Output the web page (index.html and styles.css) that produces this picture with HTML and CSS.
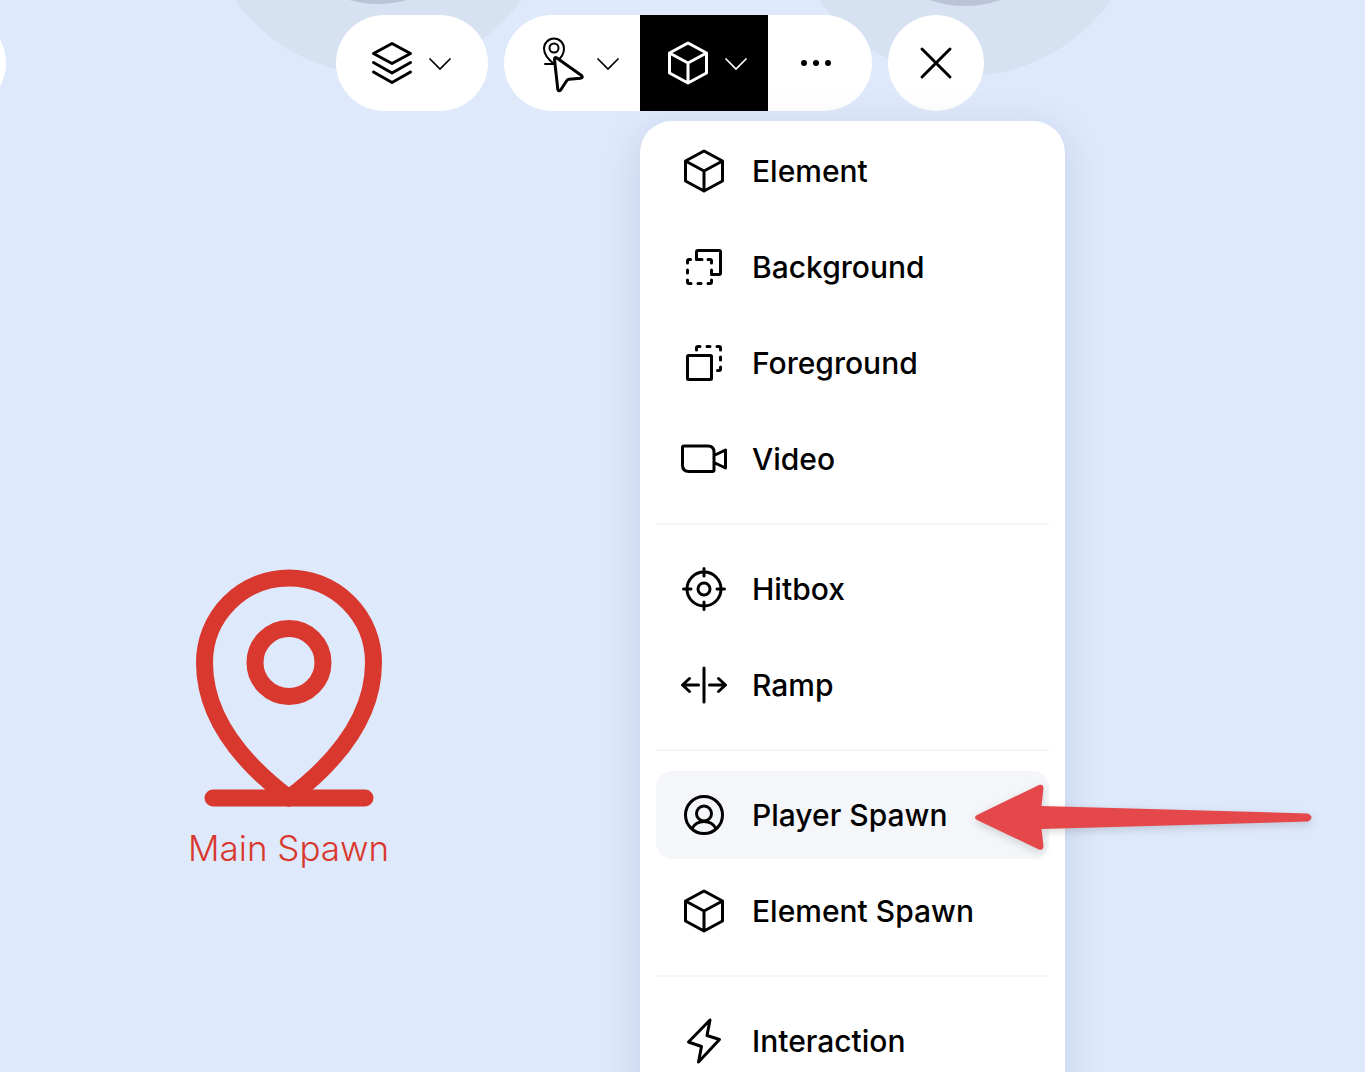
FILE: index.html
```html
<!DOCTYPE html>
<html lang="en">
<head>
  <meta charset="UTF-8" />
  <meta name="viewport" content="width=device-width, initial-scale=1.0" />
  <title>Map Editor</title>
  <link rel="stylesheet" href="styles.css">
</head>
<body>
  <!-- shared icons -->
  <svg class="sprite" aria-hidden="true">
    <symbol id="cube" viewBox="0 0 48 48">
      <path d="M24 4 42.500 14V34L24 44 5.500 34V14Z M5.500 14 24 24 42.500 14 M24 24V44" />
    </symbol>
    <symbol id="chevron" viewBox="0 0 24 24">
      <path d="M2 8l10 10L22 8" />
    </symbol>
  </svg>

  <main class="map">
    <div class="zone zone-left"></div>
    <div class="zone zone-right"></div>

    <div class="spawn">
      <svg class="spawn-pin" viewBox="0 0 200 240" aria-hidden="true">
        <path d="M100 230C63 202 15.500 157 15.500 94.500a84.500 84.500 0 0 1 169 0C184.500 157 137 202 100 230Z" />
        <circle cx="100" cy="94.500" r="34" />
        <path d="M24 230H176" />
      </svg>
      <span class="spawn-label">Main Spawn</span>
    </div>

    <header class="toolbar">
      <button class="pill pill-edge" aria-label="Back"></button>

      <div class="pill layers">
        <button class="tool" aria-label="Layers">
          <svg class="icon" viewBox="0 0 48 48"><path d="M24 4.500 42.500 14.500 24 24.500 5.500 14.500Z M5.500 23.500 24 34 42.500 23.500 M5.500 33 24 43.500 42.500 33" /></svg>
          <svg class="chevron"><use href="#chevron" /></svg>
        </button>
      </div>

      <div class="pill tools">
        <button class="tool tool-first" aria-label="Select">
          <svg class="icon" viewBox="0 0 48 48">
            <g class="thin">
              <path d="M18 25C13 21 8 16 8 9.500a10 10 0 0 1 20 0C28 14 25 19 21 22" />
              <circle cx="18" cy="9" r="4.500" />
              <path d="M9 25h8" />
            </g>
            <path class="pointer" d="M20.500 18.800 45.500 36.500Q47.500 38.800 44.500 39.300L33 40.300Q31.500 40.500 30.500 42L24.800 50.800Q22.500 53 21.800 50.300L18.500 20.300Q18.600 18 20.500 18.800Z" />
          </svg>
          <svg class="chevron"><use href="#chevron" /></svg>
        </button>
        <div class="dropdown">
          <button class="tool active" aria-label="Add" aria-expanded="true">
            <svg class="icon"><use href="#cube" /></svg>
            <svg class="chevron"><use href="#chevron" /></svg>
          </button>

          <div class="menu">
            <div class="menu-group">
              <button class="menu-item">
                <svg class="icon"><use href="#cube" /></svg>
                Element
              </button>
              <button class="menu-item">
                <svg class="icon" viewBox="0 0 48 48">
                  <path d="M22 16.500H16.500V9Q16.500 7.500 18 7.500H39Q40.500 7.500 40.500 9V30Q40.500 31.500 39 31.500H31.500" />
                  <path d="M7.500 20V18Q7.500 16.500 9 16.500H10.500 M28 16.500H30Q31.500 16.500 31.500 18V20 M31.500 37V39Q31.500 40.500 30 40.500H28 M11 40.500H9Q7.500 40.500 7.500 39V37 M7.500 27V30 M31.500 27V30 M18 40.500H21" />
                </svg>
                Background
              </button>
              <button class="menu-item">
                <svg class="icon" viewBox="0 0 48 48">
                  <rect x="7.500" y="16.500" width="24" height="24" rx="1" />
                  <path d="M16.500 11V9Q16.500 7.500 18 7.500H20 M27 7.500H30 M37 7.500H39Q40.500 7.500 40.500 9V11 M40.500 18V21 M40.500 28V30Q40.500 31.500 39 31.500H37.500" />
                </svg>
                Foreground
              </button>
              <button class="menu-item">
                <svg class="icon" viewBox="0 0 48 48">
                  <path d="M4 11H28Q34 11 34 17V35Q34 36.500 32.500 36.500H9Q2.500 36.500 2.500 30V12.500Q2.500 11 4 11Z M34 20.500 45.500 15V33L34 27.500" />
                </svg>
                Video
              </button>
            </div>
            <div class="menu-group">
              <button class="menu-item">
                <svg class="icon" viewBox="0 0 48 48">
                  <circle cx="24" cy="24" r="17" />
                  <circle cx="24" cy="24" r="6" />
                  <path d="M24 3.500V11 M24 37V44.500 M3.500 24H11 M37 24H44.500" />
                </svg>
                Hitbox
              </button>
              <button class="menu-item">
                <svg class="icon" viewBox="0 0 48 48">
                  <path d="M24 7V41 M18.500 24H2.500 M9.500 17.500 2.500 24 9.500 30.500 M29.500 24H45.500 M38.500 17.500 45.500 24 38.500 30.500" />
                </svg>
                Ramp
              </button>
            </div>
            <div class="menu-group">
              <button class="menu-item hover">
                <svg class="icon" viewBox="0 0 48 48">
                  <circle cx="24" cy="24" r="18.500" />
                  <circle cx="24" cy="22.500" r="7.500" />
                  <path d="M12 37.500C17 28 31 28 36 37.500" />
                </svg>
                Player Spawn
              </button>
              <button class="menu-item">
                <svg class="icon"><use href="#cube" /></svg>
                Element Spawn
              </button>
            </div>
            <div class="menu-group">
              <button class="menu-item">
                <svg class="icon" viewBox="0 0 48 48">
                  <path d="M30 3 8.500 25 21.500 29.500 18.500 45 39.500 22.500 27 18.500Z" />
                </svg>
                Interaction
              </button>
            </div>
          </div>
        </div>
        <button class="tool tool-last" aria-label="More">
          <svg class="icon dots" viewBox="0 0 48 48"><circle cx="12" cy="24" r="3" /><circle cx="24" cy="24" r="3" /><circle cx="36" cy="24" r="3" /></svg>
        </button>
      </div>

      <button class="pill close" aria-label="Close">
        <svg class="icon" viewBox="0 0 48 48"><path d="M10 10 38 38 M38 10 10 38" /></svg>
      </button>
    </header>

    <svg class="arrow" viewBox="0 0 340 72" aria-hidden="true">
      <path d="M3 33 65 3Q69 2 69.500 6L67.500 24 334 31.500Q341 35.500 334 39.500L67.500 47 69.500 64Q69 69 65 67.500L3 38Q-1 35.500 3 33Z" />
    </svg>
  </main>
</body>
</html>
```

FILE: styles.css
```css
* {
  box-sizing: border-box;
}
body {
  margin: 0;
  font-family: Inter, sans-serif;
  background: #dee9fb;
}
button {
  border: 0;
  padding: 0;
  background: none;
  font: inherit;
  color: inherit;
  cursor: pointer;
}
.sprite {
  position: absolute;
  width: 0;
  height: 0;
}
.map {
  position: relative;
  height: 100vh;
  overflow: hidden;
}

/* map objects */
.zone {
  position: absolute;
  border-radius: 50%;
  border: 70px solid #d6e1f2;
  background: #bac4d6;
}
.zone-left {
  left: 203px;
  top: -276px;
  width: 350px;
  height: 350px;
}
.zone-right {
  left: 787px;
  top: -280px;
  width: 356px;
  height: 356px;
}
.spawn {
  position: absolute;
  left: 188px;
  top: 568px;
  display: flex;
  flex-direction: column;
  align-items: center;
  color: #d9382e;
}
.spawn-pin {
  width: 200px;
  height: 240px;
  fill: none;
  stroke: currentColor;
  stroke-width: 17;
  stroke-linecap: round;
  stroke-linejoin: round;
}
.spawn-label {
  margin-top: 18px;
  font-size: 35px;
  line-height: 44px;
  font-weight: 300;
  white-space: nowrap;
}

/* toolbar */
.toolbar {
  position: relative;
  display: flex;
  gap: 16px;
  padding-top: 15px;
}
.pill {
  display: flex;
  height: 96px;
  border-radius: 48px;
  background: #fff;
}
.pill-edge {
  width: 96px;
  margin-left: -90px;
}
.layers {
  margin-left: 314px;
}
.tool {
  display: flex;
  align-items: center;
  gap: 12px;
  height: 96px;
  padding: 0 20px 0 24px;
}
.layers .tool {
  padding: 0 36px 0 32px;
}
.tool-first {
  padding-left: 32px;
}
.tool-last {
  padding-right: 32px;
}
.active {
  background: #000;
  color: #fff;
}
.close {
  width: 96px;
  align-items: center;
  justify-content: center;
}
.icon {
  flex: none;
  width: 48px;
  height: 48px;
  overflow: visible;
  fill: none;
  stroke: currentColor;
  stroke-width: 3;
  stroke-linecap: round;
  stroke-linejoin: round;
}
.thin {
  stroke-width: 2;
}
.pointer {
  fill: #fff;
}
.dots {
  fill: currentColor;
  stroke: none;
}
.chevron {
  width: 24px;
  height: 24px;
  fill: none;
  stroke: currentColor;
  stroke-width: 1.7;
  stroke-linecap: round;
}

/* dropdown menu */
.dropdown {
  position: relative;
}
.menu {
  position: absolute;
  left: 0;
  top: calc(100% + 10px);
  width: 425px;
  padding: 6px 16px 48px;
  border-radius: 32px;
  background: #fff;
  box-shadow: 0 8px 40px rgba(20, 30, 90, 0.12);
}
.menu-group {
  display: flex;
  flex-direction: column;
  gap: 8px;
}
.menu-group + .menu-group {
  margin-top: 20px;
  padding-top: 20px;
  border-top: 2px solid #f4f5fa;
}
.menu-item {
  display: flex;
  align-items: center;
  gap: 24px;
  height: 88px;
  padding: 0 24px;
  border-radius: 16px;
  color: #000;
  font-size: 30px;
  font-weight: 500;
  text-align: left;
  white-space: nowrap;
}
.hover {
  background: #f4f6fa;
}

/* pointer drawn over the menu */
.arrow {
  position: absolute;
  left: 974px;
  top: 782px;
  width: 340px;
  height: 72px;
  overflow: visible;
  fill: #e5484b;
  filter: drop-shadow(0 3px 4px rgba(0, 0, 0, 0.15));
  pointer-events: none;
}
```
